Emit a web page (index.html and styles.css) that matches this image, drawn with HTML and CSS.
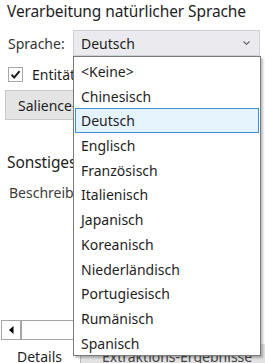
FILE: index.html
```html
<!DOCTYPE html>
<html lang="de">
<head>
  <meta charset="UTF-8" />
  <title>Verarbeitung natürlicher Sprache</title>
  <link rel="stylesheet" href="styles.css">
</head>
<body>
  <div class="panel">
    <h1 class="title">Verarbeitung natürlicher Sprache</h1>

    <div class="lang-row">
      <span class="label">Sprache:</span>
      <div class="combo">
        <span>Deutsch</span>
        <svg class="chevron" width="7" height="4" viewBox="0 0 7 4"><path d="M0.5 0.5 L3.5 3.3 L6.5 0.5" fill="none" stroke="#606060" stroke-width="1.1"/></svg>
      </div>
    </div>

    <div class="check-row">
      <span class="checkbox">
        <svg width="13" height="13" viewBox="0 0 13 13"><path d="M2.5 6.8 L5.2 9.5 L10.6 3.2" fill="none" stroke="#202020" stroke-width="2"/></svg>
      </span>
      <span>Entitäten extrahieren</span>
    </div>

    <div class="btn">Salience-Einstellungen...</div>

    <h2 class="section">Sonstiges</h2>
    <div class="desc">Beschreibung</div>

    <div class="hscroll">
      <div class="arrow-btn">
        <svg width="5" height="8" viewBox="0 0 5 8"><path d="M4.5 0 L0 4 L4.5 8 Z" fill="#000"/></svg>
      </div>
      <div class="track"></div>
    </div>

    <div class="tabs">
      <div class="tab active">Details</div>
      <div class="tab">Extraktions-Ergebnisse</div>
    </div>
  </div>

  <ul class="dropdown">
    <li>&lt;Keine&gt;</li>
    <li>Chinesisch</li>
    <li class="selected">Deutsch</li>
    <li>Englisch</li>
    <li>Französisch</li>
    <li>Italienisch</li>
    <li>Japanisch</li>
    <li>Koreanisch</li>
    <li>Niederländisch</li>
    <li>Portugiesisch</li>
    <li>Rumänisch</li>
    <li>Spanisch</li>
  </ul>
</body>
</html>
```

FILE: styles.css
```css
* {
  margin: 0;
  padding: 0;
  box-sizing: border-box;
}
body {
  font-family: 'Noto Sans', 'Open Sans', sans-serif;
  font-size: 14px;
  color: #1e1e1e;
  background: #fff;
  width: 265px;
  height: 363px;
  overflow: hidden;
  position: relative;
}
.panel {
  display: flex;
  flex-direction: column;
  height: 363px;
}
.title {
  font-size: 15.5px;
  font-weight: 400;
  letter-spacing: -0.1px;
  line-height: 22px;
  padding-left: 7px;
  white-space: nowrap;
}
.lang-row {
  display: flex;
  align-items: center;
  margin-top: 8px;
  padding-left: 8px;
  height: 26px;
}
.lang-row .label {
  width: 65px;
  color: #333;
}
.combo {
  flex: 1;
  height: 26px;
  margin-right: 5px;
  background: #ebebef;
  border: 1px solid #cfcfd6;
  display: flex;
  align-items: center;
  justify-content: space-between;
  padding: 0 9px 0 7px;
}
.chevron {
  display: block;
}
.check-row {
  display: flex;
  align-items: center;
  gap: 9px;
  height: 18px;
  margin-top: 9px;
  padding-left: 8px;
  white-space: nowrap;
}
.checkbox {
  width: 15px;
  height: 15px;
  border: 1px solid #a8a8a8;
  background: #fff;
  display: flex;
  align-items: center;
  justify-content: center;
}
.btn {
  margin: 7px 0 0 5px;
  height: 30px;
  width: 150px;
  background: #e4e4e4;
  border: 1px solid #c8c8c8;
  padding-left: 12px;
  display: flex;
  align-items: center;
  white-space: nowrap;
}
.section {
  font-size: 15.5px;
  font-weight: 400;
  letter-spacing: -0.1px;
  line-height: 22px;
  margin-top: 31px;
  padding-left: 7px;
}
.desc {
  margin-top: 10px;
  padding-left: 9px;
  color: #3c3c3c;
  line-height: 20px;
}
.hscroll {
  margin-top: auto;
  margin-left: 1px;
  margin-right: 4px;
  height: 20px;
  display: flex;
  border: 1px solid #a6a6a6;
}
.arrow-btn {
  width: 20px;
  border-right: 2px solid #a6a6a6;
  display: flex;
  align-items: center;
  justify-content: center;
}
.track {
  flex: 1;
  background: #fff;
}
.tabs {
  display: flex;
  height: 24px;
  margin-bottom: -1px;
}
.tab {
  padding: 8px 0 0 17px;
  line-height: 18px;
  white-space: nowrap;
}
.tab.active {
  width: 80px;
}
.tab:not(.active) {
  flex: 1;
  background: #e2e2e2;
  border-left: 1px solid #b8b8b8;
  margin-top: 4px;
  padding-top: 4px;
  padding-left: 21px;
  color: #444;
}
.dropdown {
  position: absolute;
  left: 73px;
  top: 56px;
  width: 188px;
  list-style: none;
  background: #fff;
  border: 1px solid #7a7a7a;
  padding: 2px 1px 0 1px;
  box-shadow: 2px 2px 2px rgba(0, 0, 0, 0.25);
}
.dropdown li {
  height: 24.7px;
  line-height: 23px;
  padding-left: 5px;
  border: 1px solid transparent;
}
.dropdown li.selected {
  background: #e5f3fd;
  border-color: #3d8fd8;
}
```
